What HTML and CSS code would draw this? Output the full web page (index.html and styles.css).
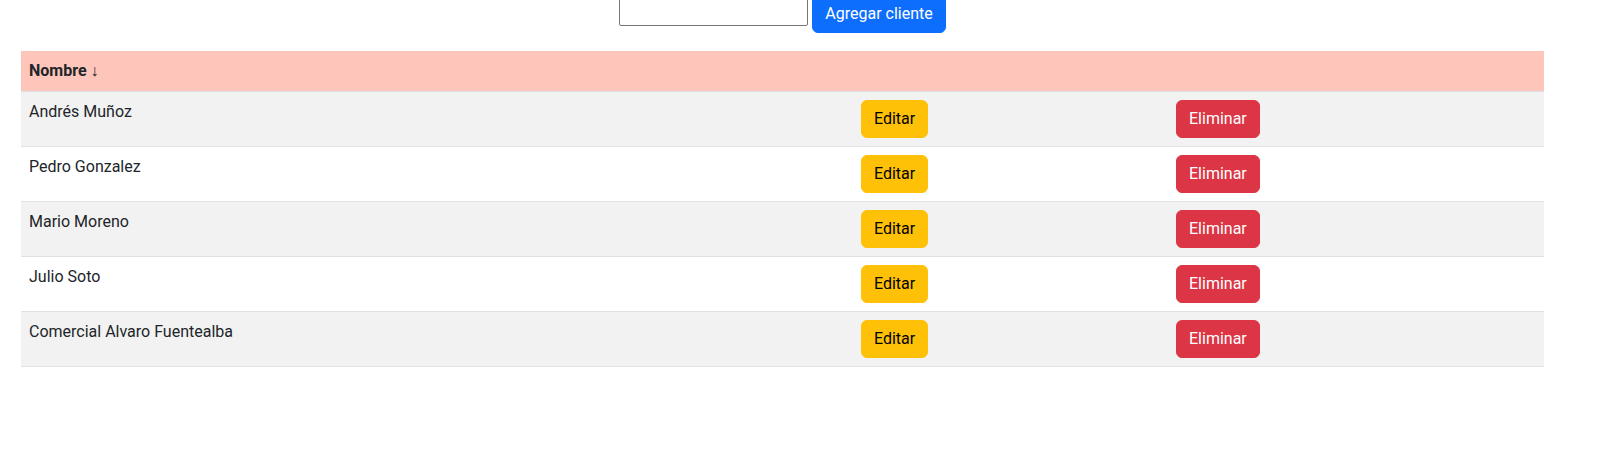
FILE: index.html
```html
<!DOCTYPE html>
<html lang="es">
<head>
<meta charset="utf-8">
<title>Clientes</title>
<link rel="stylesheet" href="styles.css">
</head>
<body>
<div class="container">
  <div class="toolbar">
    <input class="name-input" type="text">
    <button class="btn btn-primary">Agregar cliente</button>
  </div>
  <table class="table">
    <colgroup>
      <col class="col-name">
      <col class="col-edit">
      <col class="col-delete">
    </colgroup>
    <thead>
      <tr><th>Nombre <span class="arrow">↓</span></th><th></th><th></th></tr>
    </thead>
    <tbody>
      <tr><td>Andrés Muñoz</td><td><button class="btn btn-warning">Editar</button></td><td><button class="btn btn-danger">Eliminar</button></td></tr>
      <tr><td>Pedro Gonzalez</td><td><button class="btn btn-warning">Editar</button></td><td><button class="btn btn-danger">Eliminar</button></td></tr>
      <tr><td>Mario Moreno</td><td><button class="btn btn-warning">Editar</button></td><td><button class="btn btn-danger">Eliminar</button></td></tr>
      <tr><td>Julio Soto</td><td><button class="btn btn-warning">Editar</button></td><td><button class="btn btn-danger">Eliminar</button></td></tr>
      <tr><td>Comercial Alvaro Fuentealba</td><td><button class="btn btn-warning">Editar</button></td><td><button class="btn btn-danger">Eliminar</button></td></tr>
    </tbody>
  </table>
</div>
</body>
</html>
```
FILE: styles.css
```css
html, body {
  margin: 0;
  padding: 0;
  background: #fff;
}
body {
  font-family: "Segoe UI", Roboto, "Liberation Sans", Arial, sans-serif;
  font-size: 16px;
  line-height: 1.5;
  color: #212529;
}
.container {
  width: 1523px;
  margin: -6px 0 0 21px;
}
.toolbar {
  display: flex;
  justify-content: center;
  align-items: flex-end;
  gap: 4px;
  margin-bottom: 18px;
}
.name-input {
  box-sizing: border-box;
  width: 189px;
  height: 32px;
  margin: 0 0 7px 0;
  padding: 1px 2px;
  border: 1px solid #767676;
  border-radius: 2px;
  font-family: Arial, "Liberation Sans", sans-serif;
  font-size: 13.33px;
  background: #fff;
}
.btn {
  display: inline-block;
  box-sizing: border-box;
  height: 38px;
  padding: 6px 12px;
  border: 1px solid transparent;
  border-radius: 6px;
  font-family: inherit;
  font-size: 16px;
  line-height: 24px;
  cursor: pointer;
}
.btn-primary {
  background: #0d6efd;
  border-color: #0d6efd;
  color: #fff;
}
.btn-warning {
  background: #ffc107;
  border-color: #ffc107;
  color: #000;
}
.btn-danger {
  background: #dc3545;
  border-color: #dc3545;
  color: #fff;
}
.table {
  width: 1523px;
  table-layout: fixed;
  border-collapse: collapse;
  vertical-align: top;
}
.col-name { width: 832px; }
.col-edit { width: 315px; }
.col-delete { width: 376px; }
.table th,
.table td {
  padding: 8px;
  text-align: left;
  vertical-align: top;
  border-bottom: 1px solid #dee2e6;
}
.table thead th {
  background: #fec5bb;
  font-weight: 700;
  height: 24px;
}
.arrow {
  font-weight: 400;
}
.table tbody tr:nth-child(odd) td {
  background: #f2f2f2;
}
.table tbody tr:nth-child(even) td {
  background: #fff;
}
```
